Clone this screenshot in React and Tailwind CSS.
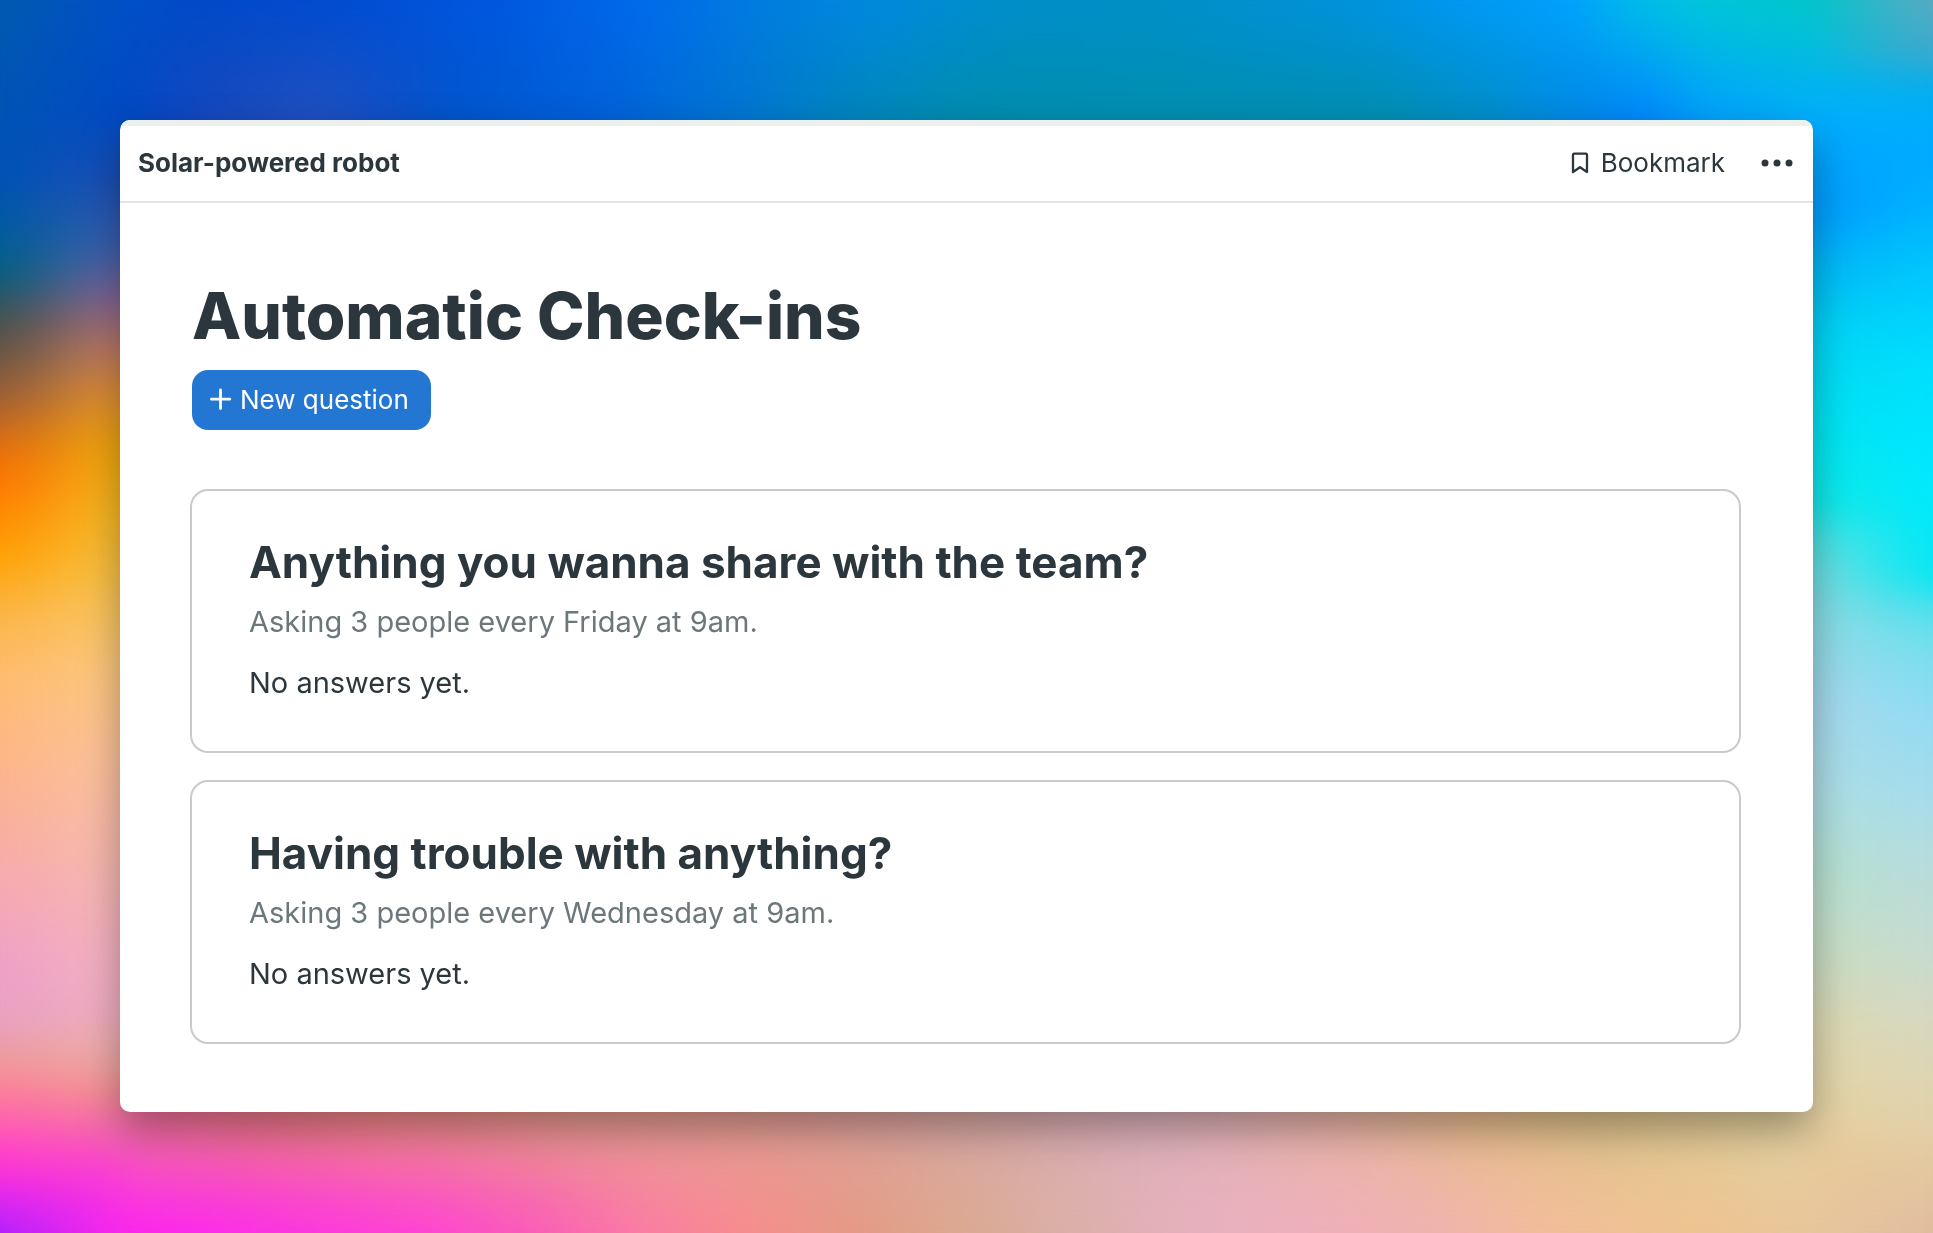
import React from "react";

// Wallpaper edge colours, [offset %, colour]. Each side blends from its outer row to its inner row.
const wallpaper = {
  left: {
    outer: [[0, "#005bb0"], [14, "#0052b8"], [19, "#005c9c"], [22, "#006080"], [26, "#44504a"], [29, "#6a5444"], [33, "#a86030"], [36, "#e06c10"], [39, "#ff7400"], [45, "#ffa000"], [50, "#fbb648"], [55, "#ffbc70"], [63, "#fcb48c"], [70, "#f8acaa"], [78, "#f0a0c8"], [83, "#e8a0c0"], [86, "#ee9c98"], [88, "#fc8498"], [91, "#ff60b0"], [95, "#ff30d8"], [97, "#e028f0"], [100, "#a820ff"]],
    inner: [[0, "#0050c8"], [9, "#0048c4"], [15, "#2050b4"], [20, "#4060b0"], [24, "#8c649c"], [28, "#c47c6c"], [32, "#e89434"], [36, "#f0ac0c"], [41, "#f4bc24"], [47, "#f8c450"], [54, "#fcc880"], [61, "#fcc49c"], [68, "#f8bcac"], [76, "#f4b4bc"], [82, "#f0b0c4"], [86, "#ecaca0"], [89, "#f48c90"], [92, "#f464b0"], [95, "#f840d0"], [100, "#ff24f0"]],
  },
  right: {
    outer: [[0, "#60aac0"], [5, "#38a8d0"], [7, "#00b0f0"], [11, "#00acff"], [15, "#00aeff"], [22, "#00c8ff"], [30, "#00e0ff"], [39, "#00eaff"], [47, "#00e8f4"], [49, "#48e0f0"], [52, "#70e0ec"], [57, "#8edcf4"], [65, "#a8dcec"], [70, "#b8dcdc"], [76, "#c4dcd4"], [83, "#d8d8c0"], [89, "#e0d4b0"], [94, "#e4caa0"], [100, "#e0bca0"]],
    inner: [[0, "#00c8c8"], [5, "#00bae4"], [10, "#00acff"], [17, "#0098ff"], [22, "#00b8f4"], [27, "#00d4f4"], [35, "#00e4f0"], [41, "#10e8e4"], [44, "#60e0e0"], [48, "#88dce0"], [57, "#a8d8ec"], [64, "#acdee4"], [70, "#b4e0d0"], [76, "#c4dec4"], [83, "#dcd8b0"], [89, "#e4d4a4"], [94, "#e8c898"], [100, "#e8c69c"]],
  },
  top: {
    outer: [[0, "#0050c8"], [4, "#004ac8"], [11, "#004bd0"], [22, "#0058e0"], [31, "#006cec"], [38, "#007ee0"], [45, "#008ae0"], [52, "#008fcc"], [61, "#0090c8"], [72, "#0092dc"], [79, "#0098f4"], [86, "#00a4ff"], [90, "#00c0e8"], [94, "#00c8d8"], [100, "#00c8c8"]],
    inner: [[0, "#0048c4"], [5, "#1848bc"], [11, "#2450bc"], [16, "#1050c4"], [20, "#0056cc"], [28, "#0060d8"], [36, "#0074d0"], [43, "#0084b8"], [50, "#008caa"], [60, "#008eac"], [75, "#008eac"], [81, "#008cc4"], [87, "#0084e8"], [90, "#0080ff"], [94, "#009cff"], [100, "#00acff"]],
  },
  bottom: {
    inner: [[0, "#f4789c"], [7, "#f08080"], [15, "#f0907c"], [26, "#e89f8a"], [40, "#e0a098"], [51, "#d8a8a8"], [61, "#dcb0bc"], [72, "#e8b4a4"], [80, "#e8bc8c"], [88, "#dcc48c"], [100, "#e4d4a4"]],
    outer: [[0, "#fc20f4"], [5, "#fc28f0"], [18, "#ff40d8"], [24, "#fc58bc"], [31, "#fc7ca4"], [37, "#f88c8c"], [44, "#e49c84"], [50, "#dcaa90"], [56, "#dcb0a8"], [64, "#e8b0c0"], [72, "#f0b0bc"], [78, "#f0b4b0"], [84, "#f4bc9c"], [93, "#f0c490"], [100, "#e8c69c"]],
  },
};

const Ramp = ({ id, stops, vertical }) => (
  <linearGradient id={id} x1="0" y1="0" x2={vertical ? 0 : 1} y2={vertical ? 1 : 0}>
    {stops.map(([offset, color]) => (
      <stop key={offset} offset={`${offset}%`} stopColor={color} />
    ))}
  </linearGradient>
);

const Side = ({ name, x, y, width, height, fade }) => {
  const vertical = name === "left" || name === "right";
  return (
    <g>
      <defs>
        <Ramp id={`${name}-outer`} stops={wallpaper[name].outer} vertical={vertical} />
        <Ramp id={`${name}-inner`} stops={wallpaper[name].inner} vertical={vertical} />
        <linearGradient id={`${name}-fade`} {...fade}>
          <stop offset="0%" stopColor="#000" />
          <stop offset="100%" stopColor="#fff" />
        </linearGradient>
        <mask id={`${name}-mask`} style={{ maskType: "luminance" }}>
          <rect x={x} y={y} width={width} height={height} fill={`url(#${name}-fade)`} />
        </mask>
      </defs>
      <rect x={x} y={y} width={width} height={height} fill={`url(#${name}-outer)`} />
      <rect x={x} y={y} width={width} height={height} fill={`url(#${name}-inner)`} mask={`url(#${name}-mask)`} />
    </g>
  );
};

function Wallpaper() {
  return (
    <svg
      className="absolute inset-0 h-full w-full"
      viewBox="0 0 1933 1233"
      preserveAspectRatio="none"
      aria-hidden="true"
    >
      <defs>
        <filter id="soften" x="-5%" y="-5%" width="110%" height="110%" colorInterpolationFilters="sRGB">
          <feGaussianBlur stdDeviation="16" />
        </filter>
      </defs>
      <g id="sides">
        <Side name="top" x={125} y={0} width={1683} height={126} fade={{ x1: 0, y1: 0, x2: 0, y2: 1 }} />
        <Side name="bottom" x={125} y={1107} width={1683} height={126} fade={{ x1: 0, y1: 1, x2: 0, y2: 0 }} />
        <Side name="left" x={0} y={0} width={126} height={1233} fade={{ x1: 0, y1: 0, x2: 1, y2: 0 }} />
        <Side name="right" x={1807} y={0} width={126} height={1233} fade={{ x1: 1, y1: 0, x2: 0, y2: 0 }} />
      </g>
      {/* Blurred copies on top hide the seams in the corners */}
      <use href="#sides" filter="url(#soften)" />
      <use href="#sides" filter="url(#soften)" />
    </svg>
  );
}

const questions = [
  {
    title: "Anything you wanna share with the team?",
    schedule: "Asking 3 people every Friday at 9am.",
    answers: "No answers yet.",
  },
  {
    title: "Having trouble with anything?",
    schedule: "Asking 3 people every Wednesday at 9am.",
    answers: "No answers yet.",
  },
];

function QuestionCard({ title, schedule, answers }) {
  return (
    <article className="rounded-[18px] border-2 border-[#cacaca] px-[57px] pt-[43px] pb-12">
      <h2 className="text-[44px] leading-14 font-bold">{title}</h2>
      <p className="mt-3 text-[29px] leading-10 text-[#6c777c]">{schedule}</p>
      <p className="mt-[21px] text-[29px] leading-10">{answers}</p>
    </article>
  );
}

export default function App() {
  return (
    <div className="relative min-h-screen p-30 font-[Inter,sans-serif] text-[#2b363d]">
      <Wallpaper />

      <div className="relative overflow-hidden rounded-[10px] bg-white shadow-[0_18px_40px_rgba(0,0,0,0.34)]">
        {/* Top bar */}
        <header className="flex items-center justify-between border-t-6 border-b-2 border-t-[#edf1ee] border-b-[#e4e4e4] pt-[19px] pr-5 pb-5 pl-[18px]">
          <a href="#project" className="text-[26px] leading-9 font-bold">
            Solar-powered robot
          </a>
          <div className="flex items-center gap-9">
            <button className="flex items-center gap-3 text-[26px] leading-9">
              <svg className="h-[22px] w-[18px]" viewBox="0 0 18 22" fill="none">
                <path
                  d="M3.2 1.7H14.8C15.5 1.7 16 2.2 16 2.9V20L9 15.2L2 20V2.9C2 2.2 2.5 1.7 3.2 1.7Z"
                  stroke="currentColor"
                  strokeWidth="2.3"
                  strokeLinejoin="round"
                />
              </svg>
              Bookmark
            </button>
            <button aria-label="More options">
              <svg className="h-2 w-8" viewBox="0 0 32 8" fill="currentColor">
                <circle cx="4" cy="4" r="3.5" />
                <circle cx="16" cy="4" r="3.5" />
                <circle cx="28" cy="4" r="3.5" />
              </svg>
            </button>
          </div>
        </header>

        <main className="pt-[77px] pr-[72px] pb-[68px] pl-[70px]">
          <div className="pl-0.5">
            <h1 className="text-[64px] leading-18 font-extrabold">Automatic Check-ins</h1>
            <button className="mt-[18px] flex h-15 items-center gap-2 rounded-2xl bg-[#2376d2] pr-[22px] pb-0.5 pl-[18px] text-[26px] text-white">
              <svg className="h-[22px] w-[22px]" viewBox="0 0 22 22" fill="none">
                <path d="M10.5 2V20.5M1.5 11.2H19.8" stroke="currentColor" strokeWidth="2.8" strokeLinecap="round" />
              </svg>
              New question
            </button>
          </div>

          <section className="mt-[59px] flex flex-col gap-[27px]">
            {questions.map((q) => (
              <QuestionCard key={q.title} {...q} />
            ))}
          </section>
        </main>
      </div>
    </div>
  );
}
